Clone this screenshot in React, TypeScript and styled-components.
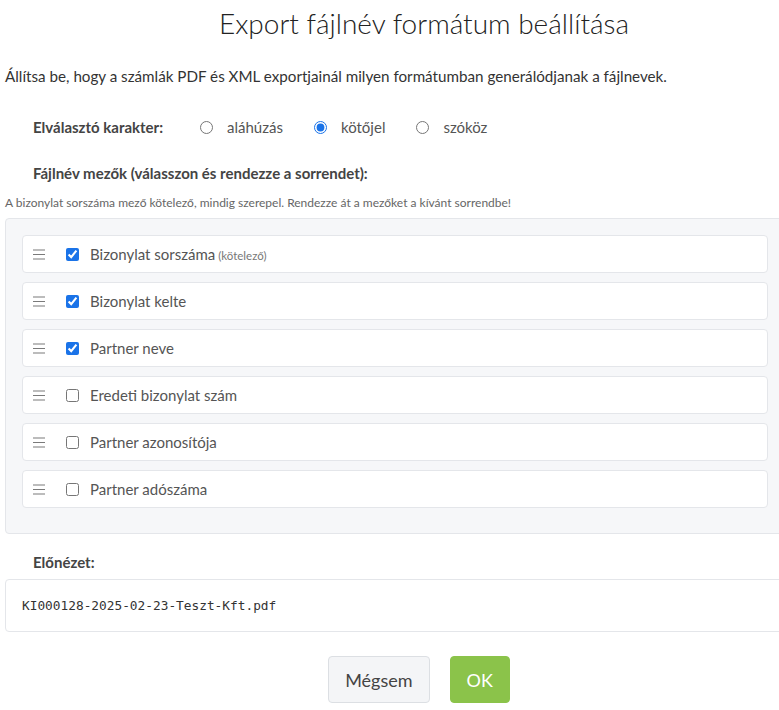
import styled, { createGlobalStyle } from "styled-components";

const GlobalStyle = createGlobalStyle`
  html, body {
    margin: 0;
    padding: 0;
    background: #fff;
    overflow: hidden;
  }
  body {
    font-family: "Lato", "Noto Sans", sans-serif;
    color: #333;
  }
`;

const Modal = styled.div`
  width: 848px;
  box-sizing: border-box;
`;

const Title = styled.h2`
  margin: 0;
  padding-top: 6px;
  height: 46px;
  text-align: center;
  font-size: 28px;
  font-weight: 300;
  color: #222;
  line-height: 34px;
`;

const Body = styled.div`
  padding: 14px 0 0 5px;
  width: 780px;
`;

const Lead = styled.p`
  margin: 0;
  font-size: 15.2px;
  line-height: 20px;
  color: #333;
`;

const OptionRow = styled.div`
  display: flex;
  align-items: center;
  padding: 0 0 0 28px;
  margin-top: 31px;
  height: 20px;
`;

const Label = styled.div`
  font-size: 15px;
  font-weight: 700;
  color: #444;
  margin-right: 37px;
`;

const RadioLabel = styled.label`
  display: flex;
  align-items: center;
  font-size: 15px;
  color: #555;
  margin-right: 31px;
  input {
    margin: 0 14px 0 0;
    accent-color: #1a73e8;
  }
`;

const SectionLabel = styled(Label)<{ $top: number }>`
  padding-left: 28px;
  margin-top: ${(p) => p.$top}px;
  line-height: 20px;
`;

const Hint = styled.div`
  margin-top: 12px;
  font-size: 12px;
  color: #666;
  line-height: 16px;
`;

const Panel = styled.div`
  margin-top: 7px;
  background: #f6f7f9;
  border: 1px solid #e4e6ea;
  border-radius: 4px;
  padding: 16px 16px 25px;
  display: flex;
  flex-direction: column;
  gap: 9px;
`;

const FieldRow = styled.div`
  height: 36px;
  background: #fff;
  border: 1px solid #e4e6ea;
  border-radius: 4px;
  display: flex;
  align-items: center;
  padding-left: 10px;
  input {
    margin: 0 11px 0 0;
    width: 13px;
    height: 13px;
    accent-color: #1a73e8;
  }
`;

const Handle = styled.span`
  display: flex;
  width: 12px;
  margin-right: 21px;
  color: #7a7a7a;
`;

const FieldText = styled.span`
  font-size: 15px;
  color: #555;
`;

const Required = styled.span`
  font-size: 11.5px;
  color: #777;
`;

const Preview = styled.div`
  margin-top: 7px;
  height: 51px;
  border: 1px solid #e4e6ea;
  border-radius: 4px;
  display: flex;
  align-items: center;
  padding-left: 16px;
  font-family: "DejaVu Sans Mono", monospace;
  font-size: 12.8px;
  color: #333;
`;

const Buttons = styled.div`
  display: flex;
  justify-content: center;
  gap: 20px;
  margin-top: 24px;
  width: 838px;
`;

const Button = styled.button<{ $primary?: boolean }>`
  height: 47px;
  padding: 0 16px;
  border-radius: 4px;
  font-family: "Lato", "Noto Sans", sans-serif;
  font-size: 18px;
  border: 1px solid ${(p) => (p.$primary ? "#8bc34a" : "#dcdfe3")};
  background: ${(p) => (p.$primary ? "#8bc34a" : "#f4f5f7")};
  color: ${(p) => (p.$primary ? "#fff" : "#444")};
`;

const HandleIcon = () => (
  <svg width="12" height="11" viewBox="0 0 12 11">
    <path d="M0 1h12M0 5.5h12M0 10h12" stroke="currentColor" strokeWidth="1.2" />
  </svg>
);

const fields = [
  { name: "Bizonylat sorszáma", checked: true, required: true },
  { name: "Bizonylat kelte", checked: true },
  { name: "Partner neve", checked: true },
  { name: "Eredeti bizonylat szám", checked: false },
  { name: "Partner azonosítója", checked: false },
  { name: "Partner adószáma", checked: false },
];

export default function App() {
  return (
    <Modal>
      <GlobalStyle />
      <Title>Export fájlnév formátum beállítása</Title>
      <Body>
        <Lead>
          Állítsa be, hogy a számlák PDF és XML exportjainál milyen formátumban generálódjanak a fájlnevek.
        </Lead>
        <OptionRow>
          <Label>Elválasztó karakter:</Label>
          <RadioLabel>
            <input type="radio" name="sep" readOnly />
            aláhúzás
          </RadioLabel>
          <RadioLabel>
            <input type="radio" name="sep" defaultChecked />
            kötőjel
          </RadioLabel>
          <RadioLabel>
            <input type="radio" name="sep" readOnly />
            szóköz
          </RadioLabel>
        </OptionRow>
        <SectionLabel $top={26}>Fájlnév mezők (válasszon és rendezze a sorrendet):</SectionLabel>
        <Hint>A bizonylat sorszáma mező kötelező, mindig szerepel. Rendezze át a mezőket a kívánt sorrendbe!</Hint>
        <Panel>
          {fields.map((f) => (
            <FieldRow key={f.name}>
              <Handle>
                <HandleIcon />
              </Handle>
              <input type="checkbox" defaultChecked={f.checked} />
              <FieldText>
                {f.name}
                {f.required && <Required> (kötelező)</Required>}
              </FieldText>
            </FieldRow>
          ))}
        </Panel>
        <SectionLabel $top={18}>Előnézet:</SectionLabel>
        <Preview>KI000128-2025-02-23-Teszt-Kft.pdf</Preview>
      </Body>
      <Buttons>
        <Button>Mégsem</Button>
        <Button $primary>OK</Button>
      </Buttons>
    </Modal>
  );
}
